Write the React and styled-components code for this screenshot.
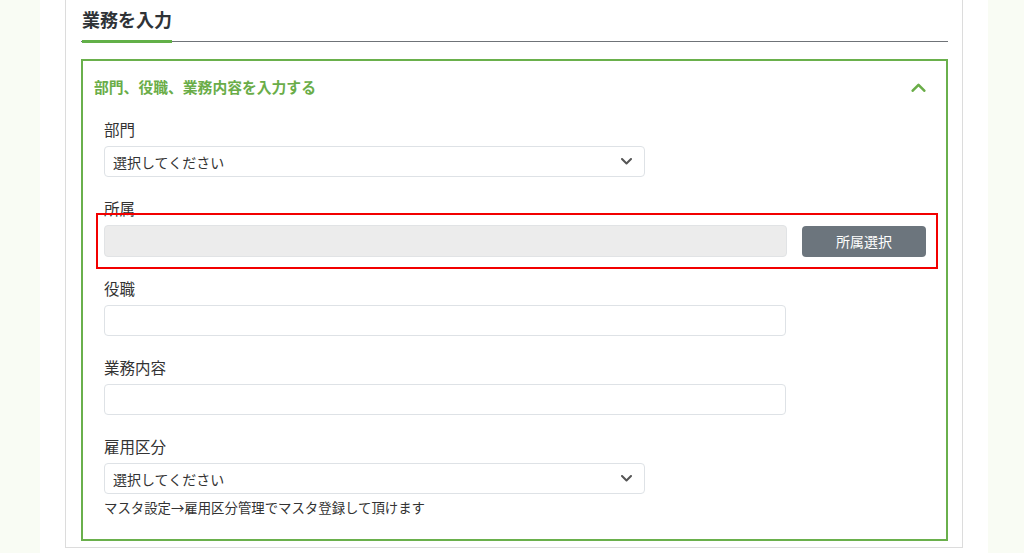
import React from "react";
import styled, { createGlobalStyle } from "styled-components";

const GlobalStyle = createGlobalStyle`
  html, body { margin: 0; padding: 0; }
  body {
    background: #f9fcf4;
    font-family: "Noto Sans CJK JP", "Noto Sans", sans-serif;
    color: #333;
  }
  * { box-sizing: border-box; }
`;

const Page = styled.div`
  margin-left: 40px;
  width: 948px;
  min-height: 553px;
  background: #fff;
  padding: 0 25px;
`;

const Panel = styled.div`
  border-left: 1px solid #dcdcdc;
  border-right: 1px solid #dcdcdc;
  border-bottom: 1px solid #dcdcdc;
  padding: 0 14px 6px 15px;
`;

const HeadingWrap = styled.div`
  display: flex;
  padding: 6px 0 0 1px;
  border-bottom: 1.5px solid #6f7378;
`;

const Heading = styled.h2`
  margin: 0 0 -2px 0;
  padding-bottom: 8px;
  font-size: 18px;
  line-height: 26px;
  font-weight: 700;
  color: #2f3337;
  border-bottom: 3px solid #62b048;
`;

const Box = styled.section`
  margin-top: 17px;
  border: 2px solid #6ab04c;
`;

const BoxHeader = styled.div`
  display: flex;
  align-items: center;
  justify-content: space-between;
  padding: 15px 20px 0 11px;
`;

const BoxTitle = styled.h3`
  margin: 0;
  font-size: 14.8px;
  line-height: 22px;
  font-weight: 700;
  color: #6aad48;
`;

const BoxBody = styled.div`
  padding: 20px 20px 22px 21px;
`;

const Field = styled.div`
  margin-bottom: ${(p) => (p.$last ? 0 : 20)}px;
`;

const Label = styled.div`
  font-size: 15.5px;
  line-height: 22px;
  margin-bottom: 6px;
  color: #333;
`;

const SelectWrap = styled.div`
  position: relative;
  width: 541px;
  height: 31px;
`;

const Select = styled.select`
  appearance: none;
  width: 100%;
  height: 100%;
  border: 1px solid #dee2e6;
  border-radius: 4px;
  background: #fff;
  padding: 0 30px 0 8px;
  font-family: inherit;
  font-size: 14px;
  color: #333;
`;

const SelectChevron = styled.svg`
  position: absolute;
  right: 13px;
  top: 12px;
  pointer-events: none;
`;

const TextInput = styled.input`
  display: block;
  width: ${(p) => p.$width || "682px"};
  height: ${(p) => p.$height || "31px"};
  border: 1px solid ${(p) => (p.disabled ? "#e1e3e5" : "#dee2e6")};
  border-radius: 4px;
  background: ${(p) => (p.disabled ? "#ececec" : "#fff")};
  font-family: inherit;
  font-size: 14px;
  padding: 0 8px;
`;

const InputRow = styled.div`
  position: relative;
  display: flex;
  align-items: center;
  gap: 15px;
`;

const GreyButton = styled.button`
  width: 124px;
  height: 31px;
  border: none;
  border-radius: 4px;
  background: #6c757d;
  color: #fff;
  font-family: inherit;
  font-size: 14px;
`;

const Highlight = styled.div`
  position: absolute;
  top: -12px;
  left: -8px;
  right: -12px;
  bottom: -12px;
  border: 2px solid #f20000;
  pointer-events: none;
`;

const Help = styled.div`
  margin-top: 3px;
  font-size: 13.4px;
  line-height: 20px;
  color: #333;
`;

const Chevron = ({ dir = "down", color = "#555", w = 11, h = 7, sw = 2 }) => (
  <svg width={w} height={h} viewBox="0 0 11 7" fill="none">
    <path
      d={dir === "down" ? "M1 1 L5.5 5.5 L10 1" : "M1 6 L5.5 1.5 L10 6"}
      stroke={color}
      strokeWidth={sw}
      strokeLinecap="round"
      strokeLinejoin="round"
    />
  </svg>
);

const SelectField = ({ children }) => (
  <SelectWrap>
    <Select defaultValue="">
      <option value="">{children}</option>
    </Select>
    <SelectChevron width="11" height="7" viewBox="0 0 11 7" fill="none">
      <path d="M1 1 L5.5 5.5 L10 1" stroke="#555" strokeWidth="2" strokeLinecap="round" strokeLinejoin="round" />
    </SelectChevron>
  </SelectWrap>
);

export default function App() {
  return (
    <>
      <GlobalStyle />
      <Page>
        <Panel>
          <HeadingWrap>
            <Heading>業務を入力</Heading>
          </HeadingWrap>
          <Box>
            <BoxHeader>
              <BoxTitle>部門、役職、業務内容を入力する</BoxTitle>
              <Chevron dir="up" color="#6aad48" w={15} h={9} sw={2} />
            </BoxHeader>
            <BoxBody>
              <Field>
                <Label>部門</Label>
                <SelectField>選択してください</SelectField>
              </Field>
              <Field>
                <Label>所属</Label>
                <InputRow>
                  <TextInput disabled $width="683px" $height="32px" />
                  <GreyButton>所属選択</GreyButton>
                  <Highlight />
                </InputRow>
              </Field>
              <Field>
                <Label>役職</Label>
                <TextInput />
              </Field>
              <Field>
                <Label>業務内容</Label>
                <TextInput />
              </Field>
              <Field $last>
                <Label>雇用区分</Label>
                <SelectField>選択してください</SelectField>
                <Help>マスタ設定→雇用区分管理でマスタ登録して頂けます</Help>
              </Field>
            </BoxBody>
          </Box>
        </Panel>
      </Page>
    </>
  );
}
